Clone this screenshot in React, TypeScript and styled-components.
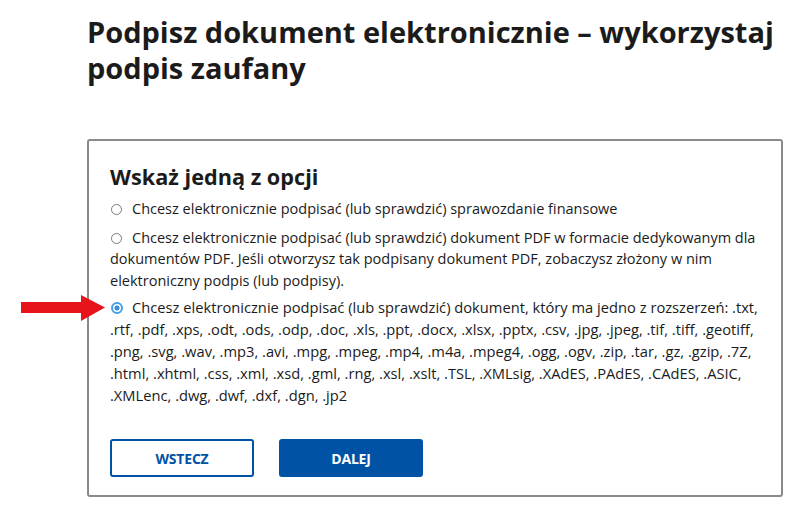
import styled, { createGlobalStyle } from "styled-components"

const GlobalStyle = createGlobalStyle`
    body {
        margin: 0;
        background: #ffffff;
        font-family: "Open Sans", "Noto Sans", sans-serif;
        color: #1b1b1b;
    }
`

const Page = styled.main`
    width: 800px;
    height: 522px;
    padding: 14px 17px 0 87px;
    box-sizing: border-box;
    overflow: hidden;
`

const Title = styled.h1`
    margin: 0 0 53px;
    font-size: 29px;
    line-height: 36px;
    font-weight: 700;
`

const Card = styled.section`
    border: 2px solid #8a8a8a;
    border-radius: 3px;
    padding: 22px 4px 20px 21px;
    height: 358px;
    box-sizing: border-box;
`

const Legend = styled.h2`
    margin: 0 0 7px;
    font-size: 21.7px;
    line-height: 28px;
    font-weight: 700;
`

const OptionList = styled.div`
    display: flex;
    flex-direction: column;
    gap: 7px;
`

const Option = styled.label<{ $wide?: boolean }>`
    position: relative;
    display: block;
    font-size: ${p => (p.$wide ? "14.7px" : "14.5px")};
    line-height: ${p => (p.$wide ? "22px" : "21.5px")};
    margin-top: ${p => (p.$wide ? "-2px" : "0")};
`

const Radio = styled.span<{ $checked?: boolean }>`
    display: inline-block;
    box-sizing: border-box;
    width: ${p => (p.$checked ? "12px" : "11px")};
    height: ${p => (p.$checked ? "12px" : "11px")};
    margin: 0 ${p => (p.$checked ? "9px" : "10px")} 0 1px;
    border-radius: 50%;
    border: ${p => (p.$checked ? "2px solid #45a0e6" : "1px solid #7a7a7a")};
    background: ${p => (p.$checked ? "radial-gradient(circle, #3a8fd8 0 2.3px, #ffffff 2.8px)" : "#ffffff")};
    vertical-align: -1px;
`

const Arrow = styled.svg`
    position: absolute;
    left: -89px;
    top: -1px;
`

const Actions = styled.div`
    display: flex;
    gap: 25px;
    margin-top: 33px;
`

const Button = styled.button<{ $primary?: boolean }>`
    width: 144px;
    height: 38px;
    border-radius: 3px;
    border: 2px solid #0052a5;
    background: ${p => (p.$primary ? "#0052a5" : "#ffffff")};
    color: ${p => (p.$primary ? "#ffffff" : "#0052a5")};
    font-family: "Open Sans", sans-serif;
    font-weight: 700;
    font-size: 14px;
    letter-spacing: -0.2px;
`

const App = () => {
    return (
        <>
            <GlobalStyle />
            <Page>
                <Title>Podpisz dokument elektronicznie – wykorzystaj podpis zaufany</Title>
                <Card>
                    <Legend>Wskaż jedną z opcji</Legend>
                    <OptionList>
                        <Option>
                            <Radio />
                            Chcesz elektronicznie podpisać (lub sprawdzić) sprawozdanie finansowe
                        </Option>
                        <Option>
                            <Radio />
                            Chcesz elektronicznie podpisać (lub sprawdzić) dokument PDF w formacie dedykowanym dla dokumentów PDF. Jeśli otworzysz tak podpisany dokument PDF, zobaczysz złożony w nim elektroniczny podpis (lub podpisy).
                        </Option>
                        <Option $wide>
                            <Arrow width="84" height="26" viewBox="0 0 84 26">
                                <path d="M0 7 H60 V0 L84 12.5 L60 26 V18 H0 Z" fill="#e8141b" />
                            </Arrow>
                            <Radio $checked />
                            Chcesz elektronicznie podpisać (lub sprawdzić) dokument, który ma jedno z rozszerzeń: .txt, .rtf, .pdf, .xps, .odt, .ods, .odp, .doc, .xls, .ppt, .docx, .xlsx, .pptx, .csv, .jpg, .jpeg, .tif, .tiff, .geotiff, .png, .svg, .wav, .mp3, .avi, .mpg, .mpeg, .mp4, .m4a, .mpeg4, .ogg, .ogv, .zip, .tar, .gz, .gzip, .7Z, .html, .xhtml, .css, .xml, .xsd, .gml, .rng, .xsl, .xslt, .TSL, .XMLsig, .XAdES, .PAdES, .CAdES, .ASIC, .XMLenc, .dwg, .dwf, .dxf, .dgn, .jp2
                        </Option>
                    </OptionList>
                    <Actions>
                        <Button type="button">WSTECZ</Button>
                        <Button type="button" $primary>DALEJ</Button>
                    </Actions>
                </Card>
            </Page>
        </>
    )
}

export default App
